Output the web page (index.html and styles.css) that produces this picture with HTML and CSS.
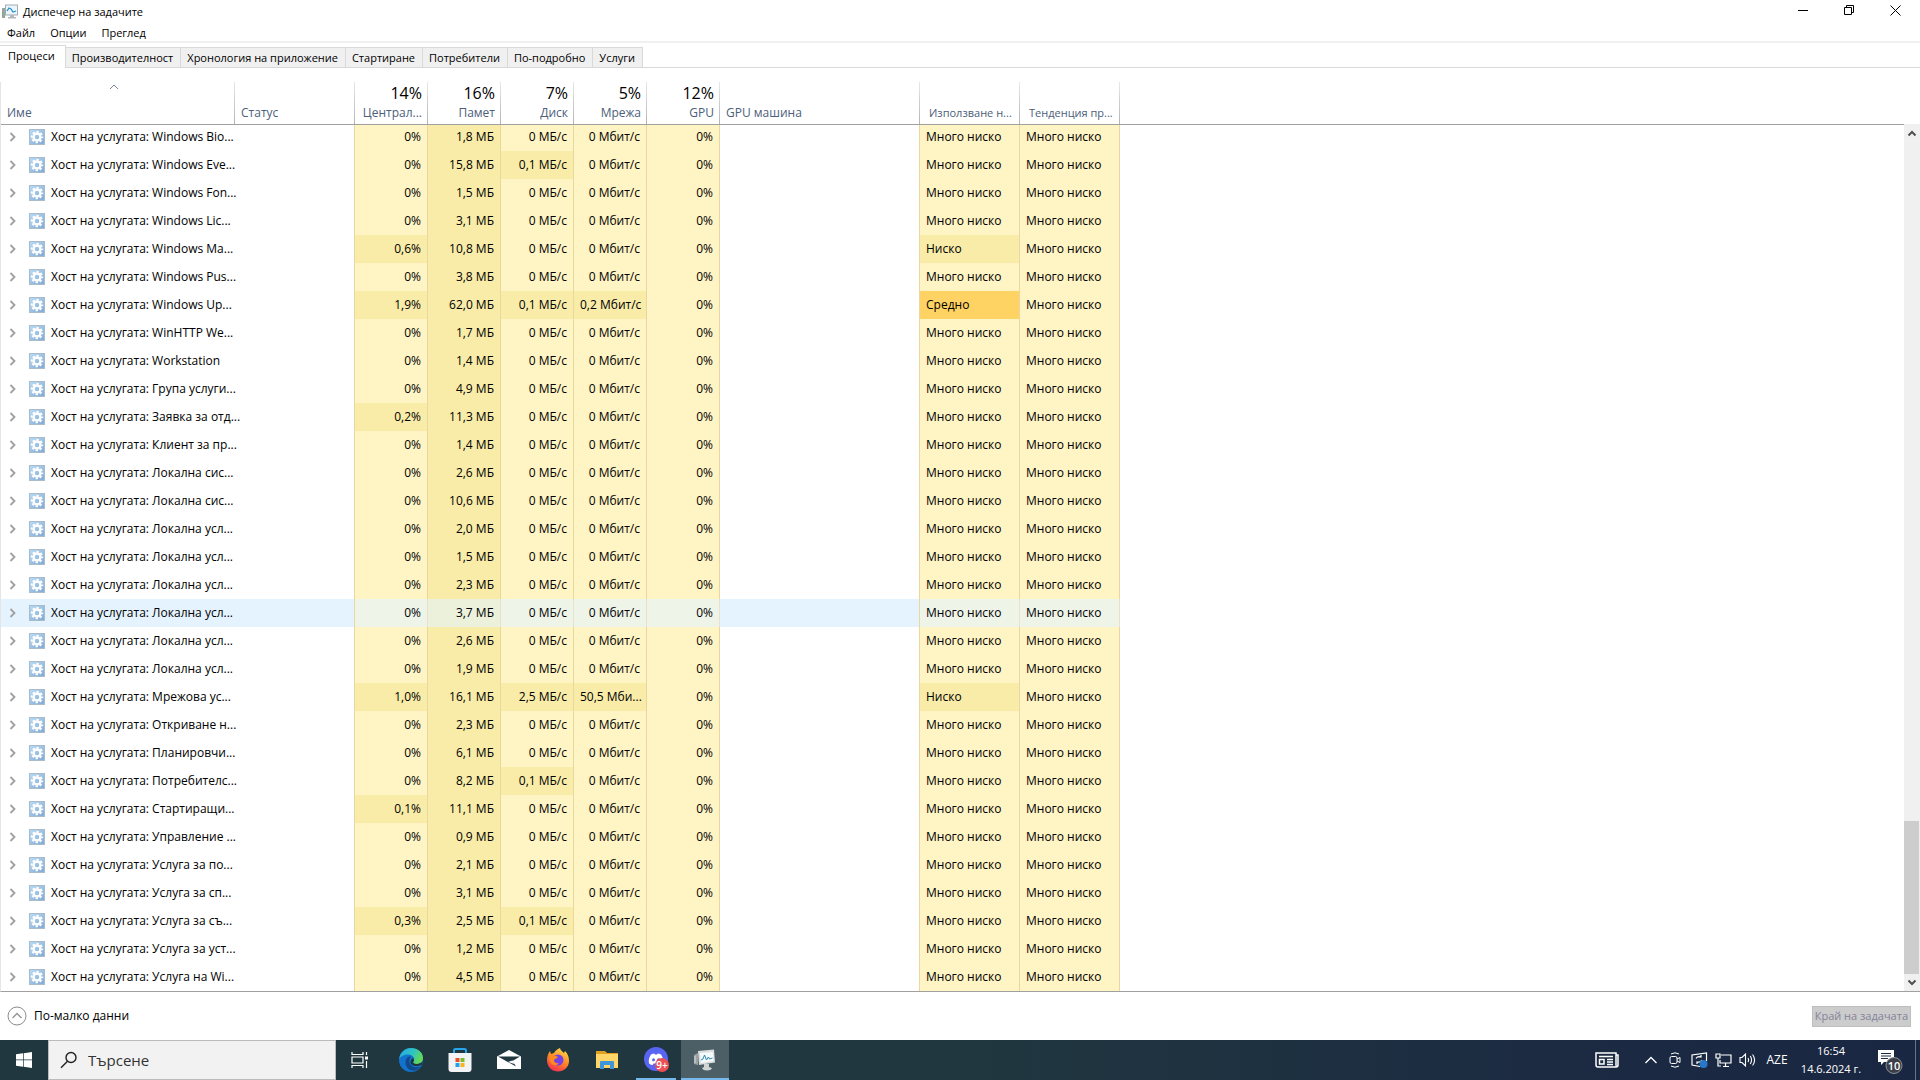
FILE: index.html
```html
<!DOCTYPE html>
<html lang="bg">
<head>
<meta charset="utf-8">
<title>Диспечер на задачите</title>
<link rel="stylesheet" href="styles.css">
</head>
<body>
<svg class="defs" aria-hidden="true">
  <defs>
    <linearGradient id="gearbg" x1="0" y1="0" x2="1" y2="1"><stop offset="0" stop-color="#b9dbf4"/><stop offset="1" stop-color="#7fa9d4"/></linearGradient>
    <symbol id="gear" viewBox="0 0 16 16">
      <rect x=".5" y=".5" width="15" height="15" fill="url(#gearbg)" stroke="#a9bccb"/>
      <circle cx="8" cy="8" r="3.500" fill="none" stroke="#fff" stroke-width="2.400"/>
      <circle cx="8" cy="8" r="5.300" fill="none" stroke="#fff" stroke-width="1.800" stroke-dasharray="2.400 1.763" stroke-dashoffset="1.200"/>
    </symbol>
    <symbol id="chev" viewBox="0 0 8 10"><path d="M1.5 1l4 4-4 4" fill="none" stroke="#a0a0a0" stroke-width="1.8"/></symbol>
  </defs>
</svg>
<header class="titlebar">
  <svg class="appicon" viewBox="0 0 16 16"><rect x="0" y="4" width="3" height="10" fill="#9aa5a1"/><rect x="0" y="8" width="1" height="5" fill="#6fb37a"/><rect x="3.500" y="1" width="12" height="10" fill="#e9f6fd" stroke="#a4abaf"/><path d="M5 7l2-3 2 1 2 3 3-1" fill="none" stroke="#2c8fc7" stroke-width="1.300"/><path d="M8 11h4v2h2v1.500H6V13h2z" fill="#b3b8bb"/></svg>
  <h1>Диспечер на задачите</h1>
  <div class="winbtns">
    <button aria-label="Минимизиране"><svg width="11" height="11" viewBox="0 0 11 11"><path d="M0 5.500h10" stroke="#000"/></svg></button>
    <button aria-label="Възстановяване"><svg width="11" height="11" viewBox="0 0 11 11" fill="none" stroke="#000"><path d="M.5 2.500h7v7h-7zM2.500 2.500v-2h7v7h-2"/></svg></button>
    <button aria-label="Затваряне"><svg width="11" height="11" viewBox="0 0 11 11"><path d="M.5.5l10 10M10.500.5l-10 10" stroke="#000"/></svg></button>
  </div>
</header>
<nav class="menubar"><button>Файл</button><button>Опции</button><button>Преглед</button></nav>
<div class="tabs" role="tablist">
  <button role="tab" class="active" aria-selected="true">Процеси</button><button role="tab">Производителност</button><button role="tab">Хронология на приложение</button><button role="tab">Стартиране</button><button role="tab">Потребители</button><button role="tab">По-подробно</button><button role="tab">Услуги</button>
</div>
<main class="pane">
  <table class="procs">
    <colgroup><col class="c-name"><col class="c-status"><col class="c-num"><col class="c-num"><col class="c-num"><col class="c-num"><col class="c-num"><col class="c-engine"><col class="c-power"><col class="c-power"><col></colgroup>
    <thead>
      <tr>
        <th class="sorted"><svg class="sort" width="10" height="6" viewBox="0 0 10 6"><path d="M1 5l4-4 4 4" fill="none" stroke="#7a8796"/></svg><span>Име</span></th>
        <th><span>Статус</span></th>
        <th class="num"><b>14%</b><span>Централ...</span></th>
        <th class="num"><b>16%</b><span>Памет</span></th>
        <th class="num"><b>7%</b><span>Диск</span></th>
        <th class="num"><b>5%</b><span>Мрежа</span></th>
        <th class="num"><b>12%</b><span>GPU</span></th>
        <th><span>GPU машина</span></th>
        <th class="power"><span>Използване н...</span></th>
        <th class="power"><span>Тенденция пр...</span></th>
        <td></td>
      </tr>
    </thead>
    <tbody id="rows"></tbody>
  </table>
  <div class="scroll" aria-hidden="true">
    <svg width="16" height="17" viewBox="0 0 16 17"><path d="M4.500 11.500L8 8l3.500 3.500" fill="none" stroke="#505050" stroke-width="2"/></svg>
    <div class="track"><div class="thumb"></div></div>
    <svg width="16" height="17" viewBox="0 0 16 17"><path d="M4.500 6.500L8 10l3.500-3.500" fill="none" stroke="#505050" stroke-width="2"/></svg>
  </div>
</main>
<footer class="actions">
  <button class="fewer"><svg width="20" height="20" viewBox="0 0 20 20" fill="none"><circle cx="10" cy="10" r="9" stroke="#8a8a8a"/><path d="M5.500 12L10 7.500l4.500 4.500" stroke="#999" stroke-width="1.500"/></svg>По-малко данни</button>
  <button class="end" disabled>Край на задачата</button>
</footer>
<div class="taskbar">
  <button class="start" aria-label="Старт"><svg width="16" height="16" viewBox="0 0 16 16" fill="#fff"><path d="M0 2.300l7-1v6.300H0zM7.700 1.200L16 0v7.600H7.700zM0 8.300h7v6.400l-7-1zM7.700 8.300H16V16l-8.300-1.200z"/></svg></button>
  <label class="search"><svg width="18" height="18" viewBox="0 0 18 18" fill="none" stroke="#222" stroke-width="1.400"><circle cx="11" cy="6.500" r="5"/><path d="M7.500 10.200L1 16.800"/></svg><input type="text" placeholder="Търсене" aria-label="Търсене"></label>
  <div class="apps">
    <button class="taskview" aria-label="Изглед на задачите"><svg width="18" height="16" viewBox="0 0 18 16" fill="none" stroke="#fff" stroke-width="1.200"><path d="M1 0v2.500h11V0M1 16v-2.500h11V16M1 5h11v6H1zM15.500 0v3M15.500 9v7"/><path d="M14 4.500h3v3h-3z" fill="#fff" stroke="none"/></svg></button>
    <button aria-label="Edge"><svg width="24" height="24" viewBox="0 0 24 24"><defs><linearGradient id="e1" x1="0" y1="0" x2="1" y2=".4"><stop offset="0" stop-color="#23a5e8"/><stop offset=".6" stop-color="#2fc5c0"/><stop offset="1" stop-color="#61d85a"/></linearGradient></defs><circle cx="12" cy="12" r="12" fill="#1273cc"/><path d="M.2 11C1 4.500 6 0 12 0c7 0 12 4.500 12 10 0 4-3 6-6.500 6-3 0-4-1-3-2.500 2-3-.5-7-5-7C5 6.500 1.500 8.500.2 11z" fill="url(#e1)"/><path d="M9 9c-3.500 2.500-3.500 9 1 12.500 3 2 8 1.500 11.500-3-5 2-10 0-11-4-.5-2 0-4 1.500-5.500C11 8.300 10 8.400 9 9z" fill="#114a8b"/><path d="M14.500 13.500c-1 1.500 0 2.500 3 2.500 2.500 0 4.700-1 6.200-2.800l-.9 3.600c-2.800 1.400-6 1.700-8.600.7-2.200-.9-3-2.500-2.600-4.500.4-1.600 1.500-2.500 2.600-2.700.9.900 1 2.200.3 3.200z" fill="#20373f"/></svg></button>
    <button aria-label="Microsoft Store"><svg width="24" height="24" viewBox="0 0 24 24"><path d="M6 6V2.500Q6 1 7.500 1h9Q18 1 18 2.500V6" fill="none" stroke="#27a4ee" stroke-width="2"/><path d="M.5 5h23v16q0 3-3 3h-17q-3 0-3-3z" fill="#f1f3f5"/><path d="M7.500 10h4v4h-4z" fill="#e94f2c"/><path d="M12.500 10h4v4h-4z" fill="#80b928"/><path d="M7.500 15h4v4h-4z" fill="#22a1ea"/><path d="M12.500 15h4v4h-4z" fill="#f8b51c"/></svg></button>
    <button aria-label="Поща"><svg width="24" height="20" viewBox="0 0 24 20"><path d="M0 6.500L12 0l12 6.500V19H0z" fill="#fff"/><path d="M1 6.500h22l-7.500 4.500 3.500 5.500L1 6.500z" fill="#20373f"/><path d="M11 12l4.500-1.500 2 3.500z" fill="#fff"/></svg></button>
    <button aria-label="Firefox"><svg width="24" height="24" viewBox="0 0 24 24"><defs><linearGradient id="f1" x1=".8" y1="0" x2=".3" y2="1"><stop offset="0" stop-color="#ffe04a"/><stop offset=".5" stop-color="#ff8a24"/><stop offset="1" stop-color="#f52c55"/></linearGradient></defs><path d="M1 12C1 8 2.500 5 4 3l1 3 3-1c1-2 3-4 6-5 0 2 2 3 4 5l1-2c3 3 4 6 4 10 0 6-5 10.500-11 10.500S1 19 1 12z" fill="url(#f1)"/><circle cx="12" cy="12" r="5.500" fill="#7542e5"/><path d="M4 8c3-1.500 5-.5 8 1-1 2-4 1.500-4 3.500s3 3.500 5 2.500c-1.500 2.500-5 3-7.500.5S3 10 4 8z" fill="#ff8a1e"/></svg></button>
    <button aria-label="Файлов мениджър"><svg width="24" height="20" viewBox="0 0 24 20"><path d="M1 1h9l2 2h11v15H1z" fill="#e0a020"/><path d="M1 4h22v14H1z" fill="#ffd667"/><path d="M5 19v-7q0-1 1-1h12q1 0 1 1v7h-4v-4H9v4z" fill="#3d95db"/></svg></button>
    <button aria-label="Discord" class="grouped"><svg width="26" height="26" viewBox="0 0 26 26"><circle cx="13" cy="12" r="12" fill="#5865f2"/><path d="M8 7.500Q10 6.500 11.300 6.500l.5 1h2.400l.5-1q1.500 0 3.300 1Q21 12 20 16.500q-2 1.500-3.700 1.500l-.8-1.500h-5L9.700 18Q8 18 6 16.500 5 12 8 7.500z" fill="#fff"/><circle cx="10.500" cy="12.800" r="1.500" fill="#5865f2"/><circle cx="15.500" cy="12.800" r="1.500" fill="#5865f2"/><circle cx="19" cy="18" r="7" fill="#ec4f55"/><text x="19" y="21.500" text-anchor="middle" font-size="10" font-weight="600" fill="#fff">9+</text></svg></button>
    <button aria-label="Диспечер на задачите" class="current"><svg width="24" height="24" viewBox="0 0 24 24"><path d="M1 7l4-2v12l-4-1z" fill="#9aa3a2"/><path d="M2 8v7" stroke="#d5dcd9"/><path d="M5 3l16-1.500 1 13L6 17z" fill="#d9dddd"/><path d="M7 5l13-1 .5 9L8 15z" fill="#f4fafc"/><path d="M8 12l2-1 1.500-4 2 5 2-3 1 2 3-1" fill="none" stroke="#2a88b8"/><path d="M11 16h5v3l3 1q-1 2.500-5 2.500T9 20l2-1z" fill="#d0d4d4"/></svg></button>
  </div>
  <div class="tray">
    <button class="news" aria-label="Новини"><svg width="24" height="16" viewBox="0 0 24 16" fill="none" stroke="#fff" stroke-width="1.500"><path d="M21 3h2v10q0 2-2 2H3q-2 0-2-2V1h20v12q0 2 1 2M4 4.500h14M12 7.500h6M12 10h6M12 12.500h6M4.500 7.500h4.500v4.500H4.500z"/></svg></button>
    <button aria-label="Скрити икони"><svg width="12" height="8" viewBox="0 0 12 8"><path d="M.5 7L6 1.500 11.500 7" fill="none" stroke="#fff" stroke-width="1.300"/></svg></button>
    <button aria-label="Среща"><svg width="12" height="16" viewBox="0 0 12 16" fill="none" stroke="#fff"><path d="M2 2q4-2.500 8 0M2 14q4 2.500 8 0"/><rect x="1" y="4.500" width="7" height="7" rx="1.500"/><path d="M8 7l3-1.500v5L8 9"/></svg></button>
    <button aria-label="Актуализация"><svg width="17" height="16" viewBox="0 0 17 16" fill="none" stroke="#fff" stroke-width="1.200"><path d="M9 14.500L1 13V3l14.500-2v8M5 6.500q1.500-2.500 5-1.500V3M10 5H8M11 8q-1 3-5 2v2M5.500 10H8"/><circle cx="12.500" cy="12" r="4" fill="#2878c8" stroke="none"/></svg></button>
    <button aria-label="Мрежа"><svg width="17" height="16" viewBox="0 0 17 16" fill="none" stroke="#fff" stroke-width="1.200"><path d="M6 3h10v8H5V8M8 14.500h6M10.500 11v3M1 2h4v4H1zM3 6v8h3"/></svg></button>
    <button aria-label="Звук"><svg width="17" height="16" viewBox="0 0 17 16" fill="none" stroke="#fff" stroke-width="1.100"><path d="M1 5.500h2L6.500 2v12L3 10.500H1zM9 6q1.200 2 0 4M11.300 4q2.500 4 0 8M13.600 2.500q4 5.500 0 11"/></svg></button>
    <button class="lang">AZE</button>
    <button class="clock"><span>16:54</span><span>14.6.2024 г.</span></button>
    <button class="notes" aria-label="Известия"><svg width="26" height="24" viewBox="0 0 26 24"><path d="M0 0h16v12H6l-3 3v-3H0z" fill="#fff"/><path d="M3 3.500h10M3 6h10M3 8.500h7" stroke="#1b2942"/><circle cx="16" cy="15.500" r="8" fill="#3a3f48" stroke="#8b9098"/><text x="16" y="19.500" text-anchor="middle" font-size="11" font-weight="600" fill="#fff">10</text></svg></button>
    <button class="desktop" aria-label="Показване на работния плот"></button>
  </div>
</div>
<script src="app.js"></script>
</body>
</html>
```
FILE: styles.css
```css
* { box-sizing: border-box; }
body {
  margin: 0;
  min-height: 100vh;
  display: flex;
  flex-direction: column;
  background: #fff;
  color: #000;
  font: 12px/16px "Open Sans", "Noto Sans", sans-serif;
}
button { border: 0; margin: 0; padding: 0; background: none; color: inherit; font: inherit; }
svg { display: block; flex: none; }
.defs { position: absolute; width: 0; height: 0; }

.titlebar { display: flex; align-items: center; height: 24px; padding: 0 2px; gap: 5px; }
.titlebar h1 { margin: 0; font: inherit; font-size: 11px; flex: 1; }
.appicon { width: 16px; height: 16px; }
.winbtns { display: flex; align-self: flex-start; }
.winbtns button { width: 46px; height: 20px; display: grid; place-items: center; }

.menubar { display: flex; gap: 15px; height: 19px; padding-left: 7px; border-bottom: 2px solid #f0f0f0; font-size: 11px; }

.tabs { display: flex; align-items: flex-end; height: 25px; border-bottom: 1px solid #d9d9d9; font-size: 11px; }
.tabs button { height: 20px; padding: 0 7px 0 6px; background: #f0f0f0; border: 1px solid #d9d9d9; border-left: 0; border-bottom: 0; white-space: nowrap; }
.tabs .active { height: 23px; padding: 0 10px 2px 8px; background: #fff; margin-bottom: -1px; }

.pane { display: flex; margin-top: 14px; border-left: 1px solid #e5e5e5; border-bottom: 1px solid #a0a0a0; }
.procs { flex: 1; width: 0; table-layout: fixed; border-collapse: separate; border-spacing: 0; }
.c-name { width: 234px; }
.c-status { width: 120px; }
.c-num { width: 73px; }
.c-engine { width: 200px; }
.c-power { width: 100px; }
.procs th, .procs td { padding: 0 6px; text-align: left; font-weight: 400; white-space: nowrap; }
.procs thead th, .procs thead td { height: 43px; padding-bottom: 3px; vertical-align: bottom; border-bottom: 1px solid #a0a0a0; color: #4c607a; }
.procs thead th { background: linear-gradient(#e8e8e8, #b4b4b4) right top / 1px 100% no-repeat; }
.procs thead .sorted { padding-right: 14px; }
.procs thead span, .procs thead b { display: block; }
.procs thead b { margin-bottom: 2px; font-size: 16px; line-height: 20px; font-weight: 400; color: #000; }
.procs thead .power { padding-left: 9px; padding-right: 0; font-size: 11px; }
.procs .num { text-align: right; }
.sort { margin: 0 auto 15px; }
.procs tbody td { height: 28px; }
.procs tbody tr:first-child td { height: 26px; padding-bottom: 2px; }
.name { display: flex; align-items: center; }
.name .chev { width: 8px; height: 10px; margin: 0 12px 0 2px; }
.name .gear { width: 16px; height: 16px; margin-right: 6px; }
.procs tbody .heat { background: #fff4c4; border-right: 1px solid #ead7a0; }
.procs tbody .mid { background: #f9eca8; }
.procs tbody .hot { background: #ffd264; }
.procs tbody .edge { border-right: 1px solid #ead7a0; }
.procs .hover td { background: #e5f3ff; }
.procs .hover .rest { background: none; }
.procs tbody .hover .heat { background: #eff4e9; border-right-color: #e8e2cd; }
.procs tbody .hover .mid { background: #ecf1dc; }

.scroll { width: 16px; margin-top: 42px; background: #f0f0f0; display: flex; flex-direction: column; }
.track { flex: 1; display: flex; flex-direction: column; justify-content: flex-end; }
.thumb { height: 18.4%; margin-right: 1px; background: #cdcdcd; }

.actions { flex: 1; display: flex; align-items: center; justify-content: space-between; padding: 0 9px 0 7px; }
.fewer { display: flex; align-items: center; gap: 7px; }
.end { height: 21px; padding: 0 2px; border: 1px solid #bfbfbf; background: #ccc; color: #838399; font-size: 11px; }

.taskbar { display: flex; height: 40px; color: #fff; background: linear-gradient(90deg, #20373f 0%, #20373f 50%, #1b2942 85%, #1a2742 100%); }
.taskbar button { display: grid; place-items: center; }
.start { width: 48px; }
.search { display: flex; align-items: center; gap: 10px; width: 288px; padding-left: 11px; background: #f2f2f2; border: 1px solid #bbb; }
.search input { flex: 1; min-width: 0; border: 0; padding: 0; background: none; outline: 0; font: 15px/20px "Open Sans", sans-serif; color: #333; }
.search input::placeholder { color: #333; opacity: 1; }
.apps { display: flex; gap: 1px; }
.apps button { width: 48px; }
.apps .taskview { width: 50px; padding-right: 2px; }
.apps .grouped { background: linear-gradient(#76b9ed, #76b9ed) center bottom / 40px 2px no-repeat; }
.apps .current { background: linear-gradient(#76b9ed, #76b9ed) center bottom / 100% 2px no-repeat #4d5f66; }
.tray { display: flex; margin-left: auto; }
.tray button { width: 24px; }
.tray .news { width: 48px; margin-right: 8px; }
.tray .lang { width: 36px; }
.tray .clock { width: 72px; align-content: center; white-space: nowrap; font-size: 11px; line-height: 18px; }
.tray .notes { width: 48px; padding-top: 4px; }
.tray .desktop { width: 5px; border-left: 1px solid #6b7486; }
```
FILE: app.js
```js
const rows = [
  ["Windows Bio...", "0%", "1,8", "0", "0"],
  ["Windows Eve...", "0%", "15,8", "0,1", "0"],
  ["Windows Fon...", "0%", "1,5", "0", "0"],
  ["Windows Lic...", "0%", "3,1", "0", "0"],
  ["Windows Ma...", "0,6%", "10,8", "0", "0", "Ниско"],
  ["Windows Pus...", "0%", "3,8", "0", "0"],
  ["Windows Up...", "1,9%", "62,0", "0,1", "0,2", "Средно"],
  ["WinHTTP We...", "0%", "1,7", "0", "0"],
  ["Workstation", "0%", "1,4", "0", "0"],
  ["Група услуги...", "0%", "4,9", "0", "0"],
  ["Заявка за отд...", "0,2%", "11,3", "0", "0"],
  ["Клиент за пр...", "0%", "1,4", "0", "0"],
  ["Локална сис...", "0%", "2,6", "0", "0"],
  ["Локална сис...", "0%", "10,6", "0", "0"],
  ["Локална усл...", "0%", "2,0", "0", "0"],
  ["Локална усл...", "0%", "1,5", "0", "0"],
  ["Локална усл...", "0%", "2,3", "0", "0"],
  ["Локална усл...", "0%", "3,7", "0", "0"],
  ["Локална усл...", "0%", "2,6", "0", "0"],
  ["Локална усл...", "0%", "1,9", "0", "0"],
  ["Мрежова ус...", "1,0%", "16,1", "2,5", "50,5 Мби...", "Ниско"],
  ["Откриване н...", "0%", "2,3", "0", "0"],
  ["Планировчи...", "0%", "6,1", "0", "0"],
  ["Потребителс...", "0%", "8,2", "0,1", "0"],
  ["Стартиращи...", "0,1%", "11,1", "0", "0"],
  ["Управление ...", "0%", "0,9", "0", "0"],
  ["Услуга за по...", "0%", "2,1", "0", "0"],
  ["Услуга за сп...", "0%", "3,1", "0", "0"],
  ["Услуга за съ...", "0,3%", "2,5", "0,1", "0"],
  ["Услуга за уст...", "0%", "1,2", "0", "0"],
  ["Услуга на Wi...", "0%", "4,5", "0", "0"],
];
const hovered = 17;
const num = (text, mid) => `<td class="num heat${mid ? " mid" : ""}">${text}</td>`;
const powerClass = { "Ниско": " mid", "Средно": " hot" };

document.getElementById("rows").innerHTML = rows.map(([name, cpu, mem, disk, net, power = "Много ниско"], i) => `
  <tr${i === hovered ? ' class="hover"' : ""}>
    <td><div class="name"><svg class="chev"><use href="#chev"/></svg><svg class="gear"><use href="#gear"/></svg>Хост на услугата: ${name}</div></td>
    <td class="edge"></td>
    ${num(cpu, cpu !== "0%")}
    ${num(mem + " МБ", true)}
    ${num(disk + " МБ/с", disk !== "0")}
    ${num(net.includes("М") ? net : net + " Мбит/с", net !== "0")}
    ${num("0%", false)}
    <td class="edge"></td>
    <td class="heat${powerClass[power] || ""}">${power}</td>
    <td class="heat">Много ниско</td>
    <td class="rest"></td>
  </tr>`).join("");
```
